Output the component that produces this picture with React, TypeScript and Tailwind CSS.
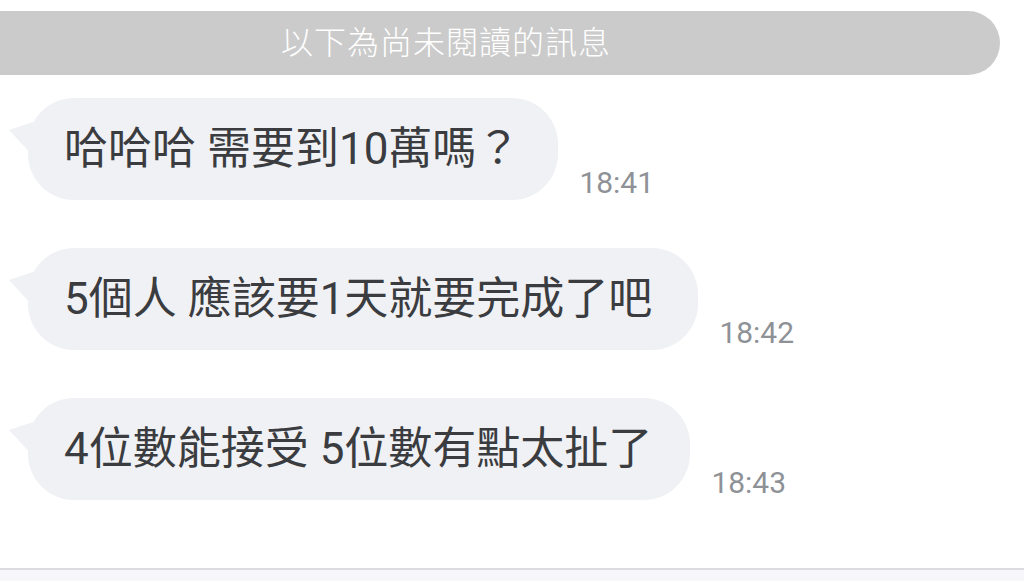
const FONT = "font-['Roboto','Noto_Sans_CJK_TC',sans-serif]"

const messages = [
  { text: '哈哈哈 需要到10萬嗎？', time: '18:41', pad: 'pr-[38px]' },
  { text: '5個人 應該要1天就要完成了吧', time: '18:42', pad: 'pr-[46px]' },
  { text: '4位數能接受 5位數有點太扯了', time: '18:43', pad: 'pr-[38px]' },
]

export default function App() {
  return (
    <div className={`w-[1024px] h-[581px] bg-white flex flex-col overflow-hidden ${FONT}`}>
      {/* Unread divider */}
      <div className="mt-[11px] w-[1000px] h-[64px] shrink-0 bg-[#cbcbcb] rounded-r-full flex items-center justify-center pr-[108px]">
        <span className="text-white text-[32px] leading-none font-light tracking-[1px]">以下為尚未閱讀的訊息</span>
      </div>

      {/* Messages */}
      <div className="flex flex-col gap-[48px] pt-[23px] pl-[28px]">
        {messages.map((m) => (
          <div key={m.time} className="flex items-end">
            <div className={`relative h-[102px] bg-[#f0f1f4] rounded-[46px] flex items-center pl-[36px] ${m.pad}`}>
              <svg className="absolute left-[-19px] top-[22px]" width="24" height="38" viewBox="0 0 24 38">
                <path d="M0 10 L24 2 L24 36 Z" fill="#f0f1f4" />
              </svg>
              <span className="text-[44px] leading-none text-[#3a3c3f] whitespace-nowrap">{m.text}</span>
            </div>
            <span className="ml-[21px] mb-[2px] text-[30px] leading-none text-[#8e9196]">{m.time}</span>
          </div>
        ))}
      </div>

      {/* Input bar edge */}
      <div className="mt-auto h-[13px] shrink-0 border-t-2 border-[#dcdce0] bg-[#f7f7fa]" />
    </div>
  )
}
